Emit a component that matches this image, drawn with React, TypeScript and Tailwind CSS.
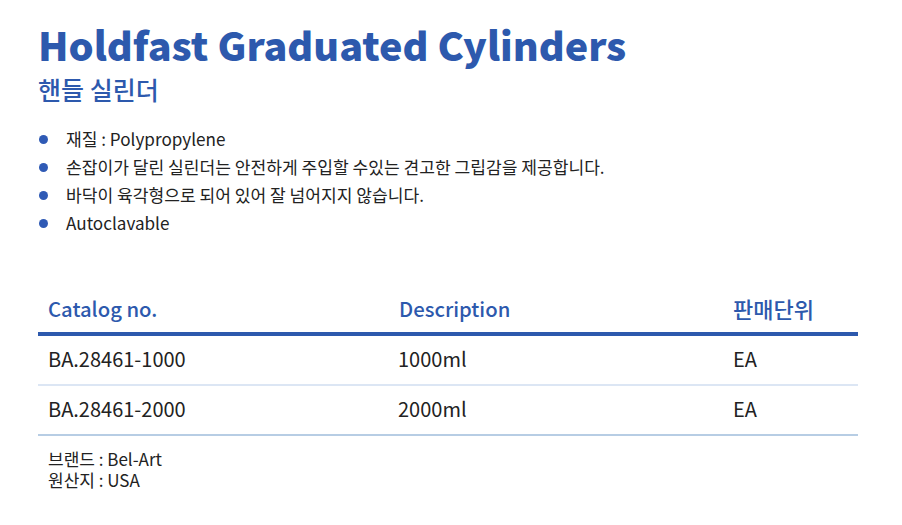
import { ReactNode } from "react";

const features = [
  "재질 : Polypropylene",
  "손잡이가 달린 실린더는 안전하게 주입할 수있는 견고한 그립감을 제공합니다.",
  "바닥이 육각형으로 되어 있어 잘 넘어지지 않습니다.",
  "Autoclavable",
];

const rows = [
  { catalog: "BA.28461-1000", desc: "1000ml", unit: "EA" },
  { catalog: "BA.28461-2000", desc: "2000ml", unit: "EA" },
];

const Cell = ({ children, className = "" }: { children: ReactNode; className?: string }) => (
  <div className={`pl-[10px] ${className}`}>{children}</div>
);

const App = () => {
  return (
    <div className="w-[902px] h-[525px] bg-white pl-[38px] pr-[44px] pt-[20px] font-['Noto_Sans_CJK_KR',sans-serif] text-[#222]">
      <h1 className="text-[39.5px] leading-[48px] font-black text-[#2d59ad]">
        Holdfast Graduated Cylinders
      </h1>
      <h2 className="mt-[3px] text-[25px] leading-[36px] font-medium text-[#2d59ad]">핸들 실린더</h2>

      <ul className="mt-[18px] flex flex-col">
        {features.map((f) => (
          <li key={f} className="flex items-center h-[28px] text-[17.1px]">
            <span className="w-[9px] h-[9px] rounded-full bg-[#2f5ab5] ml-[1px] mr-[18px]" />
            {f}
          </li>
        ))}
      </ul>

      <div className="mt-[51px]">
        <div className="grid grid-cols-[350px_335px_1fr] h-[48px] pb-[3px] items-center text-[20.3px] font-medium text-[#2d59ad] border-b-[4px] border-[#2d59ad]">
          <Cell>Catalog no.</Cell>
          <Cell className="pl-[11px]">Description</Cell>
          <Cell className="text-[22px]">판매단위</Cell>
        </div>
        {rows.map((r, i) => (
          <div
            key={r.catalog}
            className={`grid grid-cols-[350px_335px_1fr] h-[50px] pb-[3px] items-center text-[20px] border-b-2 ${
              i === rows.length - 1 ? "border-[#b7cde4]" : "border-[#dce6f4]"
            }`}
          >
            <Cell>{r.catalog}</Cell>
            <Cell>{r.desc}</Cell>
            <Cell>{r.unit}</Cell>
          </div>
        ))}
      </div>

      <p className="mt-[12px] pl-[10px] text-[17px] leading-[21px]">
        브랜드 : Bel-Art
        <br />
        원산지 : USA
      </p>
    </div>
  );
};

export default App;
